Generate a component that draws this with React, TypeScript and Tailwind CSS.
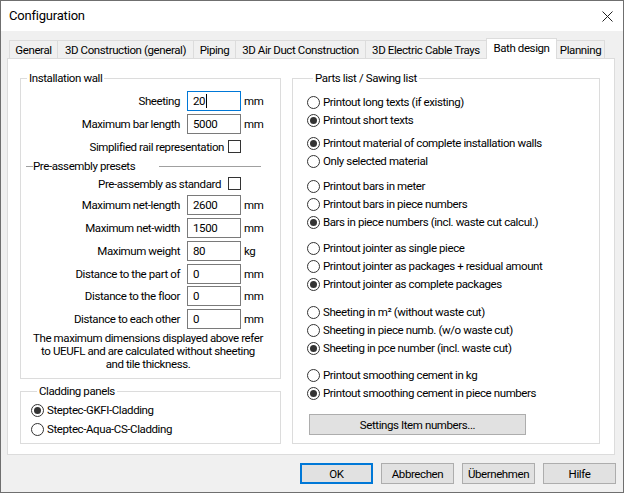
import React from "react";

function GroupBox({ title, className, children }: { title: string; className?: string; children: React.ReactNode }) {
  return (
    <fieldset className={`border border-[#dcdcdc] ${className ?? ""}`}>
      <legend className="ml-[6px] px-[2px] leading-[14px]">{title}</legend>
      {children}
    </fieldset>
  );
}

function Radio({ label, checked, className }: { label: string; checked?: boolean; className?: string }) {
  return (
    <div className={`flex items-center ${className ?? "h-[18px]"}`}>
      <span className="flex h-[13px] w-[13px] shrink-0 items-center justify-center rounded-full border border-[#333] bg-white">
        {checked && <span className="h-[7px] w-[7px] rounded-full bg-[#333]" />}
      </span>
      <span className="ml-[3px] whitespace-nowrap">{label}</span>
    </div>
  );
}

function FieldRow({ label, value, unit, focus, className }: { label: string; value: string; unit?: string; focus?: boolean; className?: string }) {
  return (
    <div className={`flex h-[20px] items-center ${className ?? ""}`}>
      <span className="w-[159px] text-right whitespace-nowrap">{label}</span>
      <div className={`ml-[7px] flex h-[20px] w-[54px] items-center border pl-[5px] ${focus ? "border-[#0078d7]" : "border-[#7a7a7a]"}`}>
        {value}
        {focus && <span className="ml-[1px] h-[14px] w-px bg-black" />}
      </div>
      {unit && <span className="ml-[3px]">{unit}</span>}
    </div>
  );
}

function CheckRow({ label, gap, className }: { label: string; gap: string; className?: string }) {
  return (
    <div className={`flex h-[13px] w-[220px] items-center justify-end ${className ?? ""}`}>
      <span className={`whitespace-nowrap ${gap}`}>{label}</span>
      <span className="h-[13px] w-[13px] shrink-0 border border-[#333] bg-white" />
    </div>
  );
}

function Tab({ label, width, active }: { label: string; width: string; active?: boolean }) {
  if (active) {
    return (
      <div className={`z-10 -mb-px flex h-[21px] items-start justify-center border border-b-0 border-[#dcdcdc] bg-white pt-[1px] whitespace-nowrap ${width}`}>
        {label}
      </div>
    );
  }
  return (
    <div className={`-ml-px flex h-[18px] items-center justify-center border border-b-0 border-[#dcdcdc] bg-[#f0f0f0] whitespace-nowrap first:ml-0 ${width}`}>
      {label}
    </div>
  );
}

function DialogButton({ label, primary }: { label: string; primary?: boolean }) {
  return (
    <div className={`flex h-[21px] w-[73px] items-center justify-center bg-[#e1e1e1] ${primary ? "border-2 border-[#0078d7]" : "border border-[#adadad]"}`}>
      {label}
    </div>
  );
}

const radioGroups: { mt: string; items: { label: string; checked?: boolean }[] }[] = [
  { mt: "mt-0", items: [{ label: "Printout long texts (if existing)" }, { label: "Printout short texts", checked: true }] },
  { mt: "mt-[5px]", items: [{ label: "Printout material of complete installation walls", checked: true }, { label: "Only selected material" }] },
  {
    mt: "mt-[7px]",
    items: [
      { label: "Printout bars in meter" },
      { label: "Printout bars in piece numbers" },
      { label: "Bars in piece numbers (incl. waste cut calcul.)", checked: true },
    ],
  },
  {
    mt: "mt-[8px]",
    items: [
      { label: "Printout jointer as single piece" },
      { label: "Printout jointer as packages + residual amount" },
      { label: "Printout jointer as complete packages", checked: true },
    ],
  },
  {
    mt: "mt-[10px]",
    items: [
      { label: "Sheeting in m² (without waste cut)" },
      { label: "Sheeting in piece numb. (w/o waste cut)" },
      { label: "Sheeting in pce number (incl. waste cut)", checked: true },
    ],
  },
  { mt: "mt-[9px]", items: [{ label: "Printout smoothing cement in kg" }, { label: "Printout smoothing cement in piece numbers", checked: true }] },
];

export default function App() {
  return (
    <div className="flex h-[493px] w-[624px] flex-col border border-[#6f6f6f] bg-[#f0f0f0] font-['Roboto',sans-serif] text-[11.5px] leading-[16px] tracking-[-0.4px] text-black">
      <div className="flex h-[30px] shrink-0 items-center justify-between bg-white pr-[10px] pl-[8px]">
        <span className="text-[13px] tracking-[-0.2px]">Configuration</span>
        <svg width="11" height="11" viewBox="0 0 11 11" className="stroke-[#222]" fill="none"><path d="M0.5 0.5 10.5 10.5M10.5 0.5 0.5 10.5" /></svg>
      </div>

      <div className="flex h-[27px] shrink-0 items-end pl-[8px]">
        <Tab label="General" width="w-[49px]" />
        <Tab label="3D Construction (general)" width="w-[137px]" />
        <Tab label="Piping" width="w-[43px]" />
        <Tab label="3D Air Duct Construction" width="w-[131px]" />
        <Tab label="3D Electric Cable Trays" width="w-[122px]" />
        <Tab label="Bath design" width="w-[71px] -ml-px" active />
        <Tab label="Planning" width="w-[49px]" />
      </div>

      <div className="ml-[6px] flex h-[397px] w-[608px] shrink-0 gap-[11px] border border-[#dcdcdc] bg-white pt-[12px] pl-[12px]">
        <div className="flex w-[261px] shrink-0 flex-col gap-[5px]">
          <GroupBox title="Installation wall" className="h-[308px]">
            <div className="pt-[6px]">
              <FieldRow label="Sheeting" value="20" unit="mm" focus />
              <FieldRow label="Maximum bar length" value="5000" unit="mm" className="mt-[3px]" />
              <CheckRow label="Simplified rail representation" gap="mr-[4px]" className="mt-[6px]" />
              <div className="mt-[6px] flex h-[14px] items-center pl-[5px]">
                <span className="h-px w-[7px] bg-[#a0a0a0]" />
                <span className="w-[126px] whitespace-nowrap">Pre-assembly presets</span>
                <span className="h-px w-[102px] bg-[#a0a0a0]" />
              </div>
              <CheckRow label="Pre-assembly as standard" gap="mr-[7px]" className="mt-[4px]" />
              <FieldRow label="Maximum net-length" value="2600" unit="mm" className="mt-[5px]" />
              <FieldRow label="Maximum net-width" value="1500" unit="mm" className="mt-[3px]" />
              <FieldRow label="Maximum weight" value="80" unit="kg" className="mt-[3px]" />
              <FieldRow label="Distance to the part of" value="0" unit="mm" className="mt-[3px]" />
              <FieldRow label="Distance to the floor" value="0" unit="mm" className="mt-[2px]" />
              <FieldRow label="Distance to each other" value="0" unit="mm" className="mt-[3px]" />
              <p className="mt-[3px] pr-[5px] text-center leading-[13px] whitespace-nowrap">
                The maximum dimensions displayed above refer
                <br />
                to UEUFL and are calculated without sheeting
                <br />
                and tile thickness.
              </p>
            </div>
          </GroupBox>
          <GroupBox title="Cladding panels" className="h-[60px] pl-[10px]">
            <div className="pt-[2px]">
              <Radio label="Steptec-GKFI-Cladding" checked className="h-[19px] pt-[1px]" />
              <Radio label="Steptec-Aqua-CS-Cladding" className="h-[19px] pt-[1px]" />
            </div>
          </GroupBox>
        </div>

        <GroupBox title="Parts list / Sawing list" className="h-[373px] w-[308px] shrink-0 pl-[14px]">
          <div className="pt-[8px]">
            {radioGroups.map((group, i) => (
              <div key={i} className={group.mt}>
                {group.items.map((r) => (
                  <Radio key={r.label} label={r.label} checked={r.checked} />
                ))}
              </div>
            ))}
          </div>
          <div className="mt-[12px] ml-[2px] flex h-[21px] w-[217px] items-center justify-center border border-[#adadad] bg-[#e1e1e1]">
            Settings Item numbers...
          </div>
        </GroupBox>
      </div>

      <div className="flex flex-1 items-start justify-end gap-[8px] pt-[8px] pr-[7px]">
        <DialogButton label="OK" primary />
        <DialogButton label="Abbrechen" />
        <DialogButton label="Übernehmen" />
        <DialogButton label="Hilfe" />
      </div>
    </div>
  );
}
